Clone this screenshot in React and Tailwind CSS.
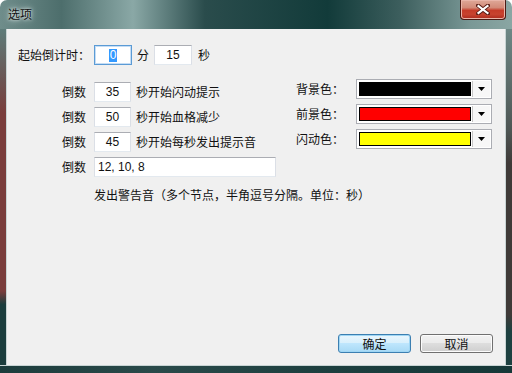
const cjk = "font-['Noto_Sans_CJK_SC','Noto_Sans',sans-serif]";

function Field({ value, w = "w-[37px]", align = "justify-center", focused = false }) {
    return (
        <div
            className={`${w} h-[20px] bg-white flex items-center ${align} text-[12px] font-['Liberation_Sans',sans-serif] text-[#111] border ${
                focused
                    ? "border-[#5b9bd5] shadow-[inset_0_0_0_1px_#c5ddf5]"
                    : "border-t-[#abadb3] border-x-[#dbdfe6] border-b-[#e3e9ef]"
            }`}
        >
            {value}
        </div>
    )
}

function ColorCombo({ color }) {
    return (
        <div className="w-[136px] h-[20px] bg-white border border-[#abadb3] flex items-center pl-[2px] pr-[1px]">
            <div className="flex-1 h-[14px] border border-black" style={{ background: color }}></div>
            <div className="w-[1px] h-[16px] bg-[#c7c7c7] ml-[1px]"></div>
            <div className="w-[17px] h-[16px] flex items-center justify-center bg-[#f7f7f7]">
                <svg width="7" height="4" viewBox="0 0 7 4">
                    <path d="M0 0h7L3.5 4z" fill="#000" />
                </svg>
            </div>
        </div>
    )
}

function Button({ children, primary }) {
    return (
        <div
            className={`w-[73px] h-[19px] rounded-[3px] flex items-center justify-center text-[12px] text-[#111] border ${
                primary
                    ? "border-[#3c7fb1] bg-[linear-gradient(#eaf6fd_0%,#d9f0fc_45%,#bee6fd_50%,#a7d9f5_100%)] shadow-[inset_0_0_0_1px_#9fd6f4]"
                    : "border-[#707070] bg-[linear-gradient(#f2f2f2_0%,#ebebeb_45%,#dddddd_50%,#cfcfcf_100%)] shadow-[inset_0_0_0_1px_#fcfcfc]"
            }`}
        >
            {children}
        </div>
    )
}

export default function App() {
    const rows = [
        { n: "35", t: "秒开始闪动提示" },
        { n: "50", t: "秒开始血格减少" },
        { n: "45", t: "秒开始每秒发出提示音" },
    ]
    const colors = [
        { l: "背景色：", c: "#000000" },
        { l: "前景色：", c: "#ff0000" },
        { l: "闪动色：", c: "#ffff00" },
    ]

    return (
        <div className={`w-[512px] h-[373px] flex flex-col rounded-t-[7px] overflow-hidden ${cjk} bg-[linear-gradient(90deg,#6f8d8b_0%,#4d6e6c_12%,#8aa8a6_26%,#2a4c4c_40%,#123b3a_64%,#3c5e5d_78%,#7a9896_92%,#8aa6a3_100%)]`}>
            {/* title bar */}
            <div className="h-[29px] flex justify-between items-start shrink-0">
                <span className="mt-[6px] ml-[8px] text-[12px] leading-[16px] text-[#111] [text-shadow:0_0_6px_#e8f0ef,0_0_3px_#e8f0ef]">选项</span>
                <div className="w-[46px] h-[20px] mr-[6px] rounded-b-[4px] border border-t-0 border-[#4b1a14] bg-[linear-gradient(#dfa898_0%,#d28a78_40%,#c53b28_55%,#c8432f_75%,#a9281c_100%)] flex items-center justify-center shadow-[inset_0_0_0_1px_#e9b5a9]">
                    <svg width="14" height="11" viewBox="0 0 14 11">
                        <path d="M2 1.5l10 8M12 1.5l-10 8" stroke="#5a1d16" strokeWidth="4" strokeLinecap="round" />
                        <path d="M2.5 2l9 7M11.5 2l-9 7" stroke="#fff" strokeWidth="2.2" strokeLinecap="square" />
                    </svg>
                </div>
            </div>

            <div className="flex flex-1">
                <div className="w-[7px] bg-[linear-gradient(#5e7c7a_0%,#6b5553_15%,#7a3d3c_25%,#7a3d3c_78%,#1b3d3d_82%,#1b3d3d_100%)] border-r border-[#c8d4d4]"></div>

                {/* client area */}
                <div className="w-[498px] h-[336px] bg-[#f0f0f0] flex flex-col text-[12px] text-[#111]">
                    <div className="mt-[16px] pl-[11px] flex items-center h-[20px]">
                        <span className="w-[76px]">起始倒计时：</span>
                        <Field
                            focused
                            value={<span className="bg-[#3399ff] text-white px-[1px] leading-[13px]">0</span>}
                            w="w-[38px]"
                        />
                        <span className="ml-[5px]">分</span>
                        <div className="ml-[5px]">
                            <Field value="15" w="w-[38px]" />
                        </div>
                        <span className="ml-[6px]">秒</span>
                    </div>

                    <div className="mt-[14px] pl-[55px] flex items-start">
                        <div className="w-[234px] pt-[3px] flex flex-col gap-[5px]">
                            {rows.map((r) => (
                                <div key={r.n} className="flex items-center h-[20px]">
                                    <span className="w-[32px]">倒数</span>
                                    <Field value={r.n} />
                                    <span className="ml-[5px] whitespace-nowrap">{r.t}</span>
                                </div>
                            ))}
                            <div className="flex items-center h-[20px]">
                                <span className="w-[32px]">倒数</span>
                                <Field value="12, 10, 8" w="w-[182px]" align="justify-start pl-[3px]" />
                            </div>
                            <div className="mt-[3px] pl-[32px] h-[20px] flex items-center whitespace-nowrap">
                                发出警告音（多个节点，半角逗号分隔。单位：秒）
                            </div>
                        </div>

                        <div className="flex flex-col gap-[5px]">
                            {colors.map((c) => (
                                <div key={c.l} className="flex items-center h-[20px]">
                                    <span className="w-[60px]">{c.l}</span>
                                    <ColorCombo color={c.c} />
                                </div>
                            ))}
                        </div>
                    </div>

                    <div className="mt-auto pb-[12px] pr-[12px] flex justify-end gap-[9px]">
                        <Button primary>确定</Button>
                        <Button>取消</Button>
                    </div>
                </div>

                <div className="w-[7px] bg-[linear-gradient(#6d8785_0%,#4e5654_30%,#3f3a38_40%,#3f3a38_85%,#1d4040_90%,#1d4040_100%)] border-l border-[#c8d4d4]"></div>
            </div>

            <div className="h-[8px] shrink-0 bg-[linear-gradient(90deg,#1c3c3c_0%,#2a4a4a_30%,#1e4040_60%,#163838_100%)] border-t border-[#c8d4d4]"></div>
        </div>
    )
}
